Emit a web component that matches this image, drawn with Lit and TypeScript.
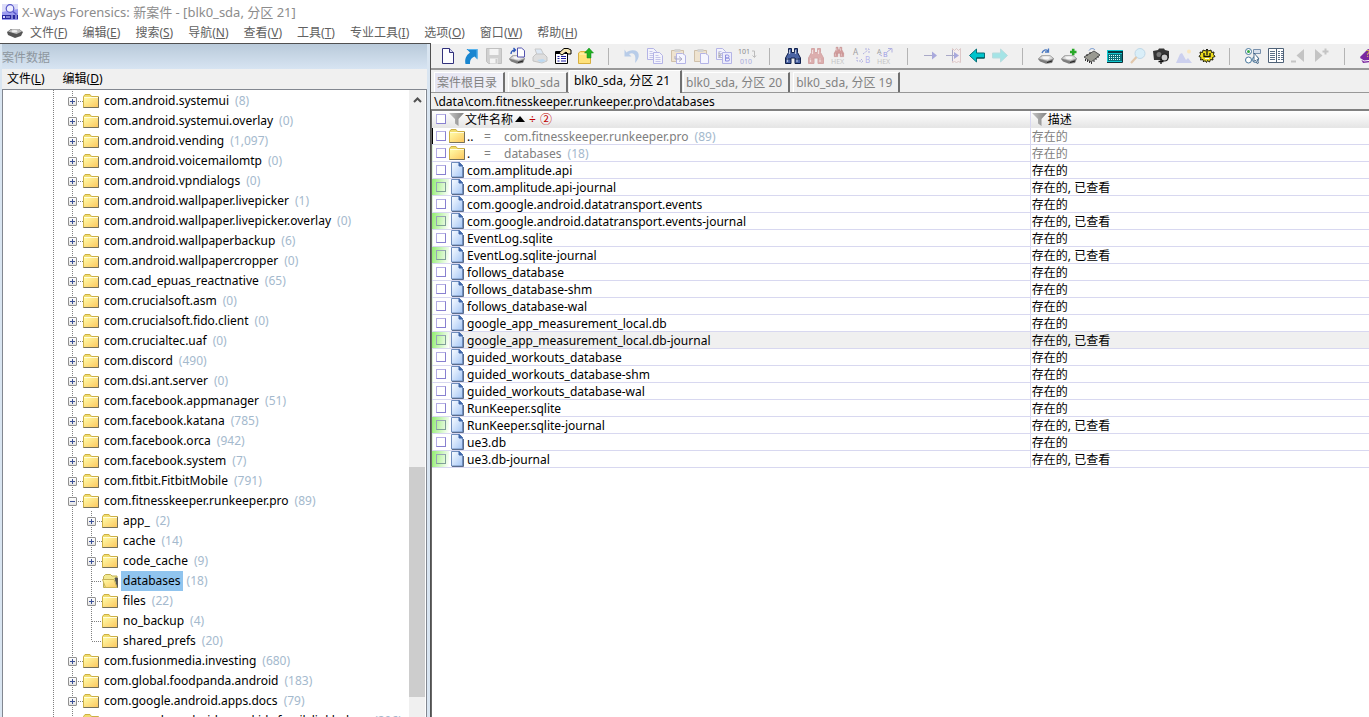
import { LitElement, html, css, svg, nothing, TemplateResult, SVGTemplateResult } from "lit";
import { customElement, property, state } from "lit/decorators.js";
import { classMap } from "lit/directives/class-map.js";

const folderShape = svg`
  <path d="M.5 14.500V3.500L2 1.500h5l1.500 2h7v11z" fill="#f0dc6c" stroke="#cdb044"/>
  <path d="M1 4.500h14v9.500H1z" fill="url(#fold)"/>
  <path d="M1 4.500h14" stroke="#fffde0"/>
  <path d="M.5 14.500h15V4" fill="none" stroke="#75705a"/>`;
const folderGradient = svg`<defs><linearGradient id="fold" x1="0" y1="0" x2="1" y2="1">
  <stop offset="0" stop-color="#fffca8"/><stop offset="1" stop-color="#fcc860"/></linearGradient></defs>`;

const drive = svg`
  <path d="M0 11l3.500-3.500h8.500l4 3-2 4.500-6 .8-6-2.300z" fill="#7d7d7d"/>
  <path d="M.500 10.500l4-3h7.500l3.500 3-6 2.500z" fill="#dcdcdc" stroke="#9b9b9b" stroke-width=".6"/>
  <ellipse cx="8" cy="9.800" rx="3.500" ry="1.300" fill="#f6f6f6"/>
  <path d="M9 14.500l5-1.500" stroke="#222" stroke-width="1.200"/>`;
const binoculars = (fill: string, stroke: string) => svg`
  <path d="M3.500 .5h3v4h3v-4h3v4l3 5.500v5.500h-5.500V10h-4v5.500H.5V10l3-5.500z" fill="${fill}" stroke="${stroke}"/>
  <path d="M4.500 2v4M2.500 10v4M10.500 2v4M12 10v4" stroke="#fff" stroke-opacity=".6" stroke-width="1.200"/>
  <path d="M.5 11h5.500M10 11h5.500" stroke="${stroke}"/>`;
const sheet = (x: number, y: number) => svg`
  <path d="M${x} ${y}h6l3 3v8h-9z" fill="#f4f4fc" stroke="#b4b4e6"/>
  <path d="M${x + 2} ${y + 3}h3M${x + 2} ${y + 5}h5M${x + 2} ${y + 7}h5M${x + 2} ${y + 9}h5" stroke="#c4c4ea"/>`;

const icons: Record<string, SVGTemplateResult> = {
  logo: svg`<path d="M0 0h16v16H0z" fill="#dcdcf8"/><path d="M0 8l16-3v11H0z" fill="#9c9cf0"/>
    <circle cx="8" cy="4.500" r="3.800" fill="#eef" stroke="#5656c8" stroke-width="1.200"/>
    <path d="M11 7.500l3.500 3" stroke="#5656c8" stroke-width="1.500"/><path d="M0 11h16v4H0z" fill="#2828a0"/>
    <path d="M1 12l2 2M3 12l-2 2M5 12v2M7 12v2M9 12h2M9 14h2M13 12h2M13 14h2" stroke="#d8d8ff"/>`,
  disk: svg`<path d="M0 7l4-3h8l4 3-2 4-6 2-7-3z" fill="#555"/><path d="M1 6.500l4-2.500h7l3 2.500-5.500 2.500z" fill="#b9b9b9"/>
    <ellipse cx="7.500" cy="6.300" rx="3" ry="1.200" fill="#eee"/>`,
  create: svg`<path d="M2.500 .5h7l4 4v11h-11z" fill="#fcfcff" stroke="#30307c"/><path d="M9.500 .5v4h4" fill="#d8d8f4" stroke="#30307c"/>`,
  open: svg`<path d="M3.500 1h11v10.500l-3-3c-4 2-4.500 4-4.500 7.500H2.500C1.500 11 3 7.500 7 4.500z" fill="#1a86d0"/><path d="M5 1.500h9V10" fill="none" stroke="#58b4ee"/>`,
  save: svg`<path d="M.5 .5h15v15h-13l-2-2z" fill="#d0d0d0" stroke="#c0c0c0"/><path d="M3.500 1h9v6h-9zM4 10.500h8v5H4z" fill="#f4f4f4"/><path d="M9.500 11h2v4h-2z" fill="#ccc"/>`,
  image: svg`${drive}<path d="M8.500 0h4l3 2.500V9h-7z" fill="#fff" stroke="#5454b0"/><path d="M2 6c0-3 2-4 4-4M4.500 0l2 2-2 2" fill="none" stroke="#2b57b8" stroke-width="1.300"/>`,
  print: svg`<path d="M3 1h6l3 6H5z" fill="#dde8f4" stroke="#c8c8c8"/><path d="M1 9l3-3h8l3 3v4l-5 2-9-2z" fill="#dedede" stroke="#c4c4c4"/><path d="M5 12l6-1 3 2-5 1.500z" fill="#bcd8f0"/>`,
  props: svg`<path d="M.5 3.500h12v12H.5z" fill="#fff" stroke="#000"/><path d="M1 5h11" stroke="#000" stroke-width="2"/>
    <path d="M2.500 8.500h2M6 8.500h5M2.500 10.500h2M6 10.500h5M2.500 13h2M6 13h5" stroke="#1c1ca0"/>
    <path d="M4 5l5-4.500h4L16 2v4h-3l-2-2-4 3z" fill="#f5e7b4" stroke="#000"/>`,
  exp: svg`<path d="M.5 5l2-1.500h10v12H.5z" fill="#ffe27c" stroke="#d8b040"/><path d="M1.500 6h7" stroke="#fff8c0"/>
    <path d="M11 0l4.500 5H13v5H9V5H6.500z" fill="#20b020" stroke="#0d8a18" stroke-width=".5"/>`,
  undo: svg`<path d="M.5 1.500v7h7L5 6C10 3.500 12.500 7 11 15c6-5.500 5-14-4-12.500-2 .3-3.500 1-4.500 2z" fill="#b8cce8"/>`,
  copy: svg`${sheet(0.5, 0.5)}${sheet(6.5, 4.5)}`,
  pasteIn: svg`<path d="M1.500 2.500h12v11h-12z" fill="#efe3cf" stroke="#cfc0aa"/><path d="M4.500 1h6v3h-6z" fill="#d4d4d4"/>
    <path d="M6.500 5.500h6l3 2v8h-9z" fill="#f6f6ff" stroke="#b4b4e6"/><path d="M5 8v3h6M9 8.500l3 2.500-3 2.500" fill="none" stroke="#a9a9c4"/>`,
  paste: svg`<path d="M1.500 2.500h12v11h-12z" fill="#efe3cf" stroke="#cfc0aa"/><path d="M4.500 1h6v3h-6z" fill="#d4d4d4"/>
    <path d="M7.500 5.500h5l3 2v8h-8z" fill="#f6f6ff" stroke="#b4b4e6"/>`,
  replace: svg`${sheet(0.5, 0.5)}<path d="M6.500 4.500h9v11h-9z" fill="#ededfb" stroke="#b4b4e6"/>
    <path d="M3 4v6M3 8l2.500-2M3.500 8l2 2" fill="none" stroke="#aaa"/><path d="M9.500 7v6h2.500a1.500 1.500 0 0 0 0-3h-2.500h2a1.500 1.500 0 0 0 0-3z" fill="none" stroke="#8e8ee0"/>`,
  convert: svg`<text x="-1" y="6" font-size="7" fill="#8a8a8a">101</text><text x="1" y="16" font-size="7" fill="#a9a9da">010</text>
    <path d="M13 3h2.500v6M13.500 7.500l2 2 1.500-2" fill="none" stroke="#bbb"/>`,
  find: binoculars("#4a64a4", "#10204c"),
  findText: svg`${binoculars("#dcaeae", "#d4a6a6")}`,
  findHex: svg`<g transform="translate(3 -1) scale(.62)">${binoculars("#d29d9d", "#c48b8b")}</g><text x="0" y="16" font-size="7" fill="#c4c4c4">HEX</text>`,
  replText: svg`<text x="-1" y="7" font-size="8" fill="#a0a0a0">A</text><text x="11" y="15" font-size="8" fill="#b4b4ee">B</text>
    <path d="M3 9v4h5M7 11l2 2-2 2M9 6l5-4M11 1h4v4" fill="none" stroke="#b0b0e0" stroke-dasharray="2 1"/>`,
  replHex: svg`<text x="0" y="6" font-size="7" fill="#a0a0a0">A</text><text x="6" y="9" font-size="7" fill="#9a9ae6">B</text>
    <path d="M2 6l3 2M10 4l4-3M11 .5h4v4" fill="none" stroke="#b0b0e0"/><text x="0" y="16" font-size="7" fill="#c4c4c4">HEX</text>`,
  goto: svg`<path d="M1 7.500h12" stroke="#a9a9c8"/><path d="M9 3.500l5 4-5 4z" fill="#a9a9dc"/>`,
  gotoIn: svg`<path d="M6.500 .5l2 2 2-2 2 2 2-2v14l-2-1-2 1-2-1-2 1z" fill="#f6eeee" stroke="#dcc8c8"/><path d="M0 7.500h10M6.500 2v11" stroke="#a9a9c8"/><path d="M8 4l5 3.500L8 11z" fill="#a9a9dc"/>`,
  back: svg`<path d="M.5 7.500L7.500 1v4h8v5h-8v4z" fill="#00c4cc" stroke="#087078"/><path d="M7.500 10h8" stroke="#044"/>`,
  forward: svg`<path d="M15.500 7.500L8.500 1v4h-8v5h8v4z" fill="#a4e4e6" stroke="#b8dcde"/>`,
  driveOpen: svg`${drive}<path d="M4 5c1-3 4-4 6-2M10.500 .5V4H7" fill="none" stroke="#4a78c0" stroke-width="1.300"/>`,
  driveAdd: svg`${drive}<path d="M9 4h6.500M12.200 .8v6.500" stroke="#28a828" stroke-width="2.600"/>`,
  ram: svg`<path d="M0 9l10-6 6 4-9 7z" fill="#9a9a92" stroke="#555"/><path d="M1.500 11v2M3.500 12v2M5.500 13v2M7.500 14v2M10 12v2M12 10v2M14 8v2M3 6v2M6 4v2" stroke="#333"/><path d="M5 2.500c2-3 5-2 6-.5" fill="none" stroke="#6a90cc"/>`,
  calc: svg`<path d="M0 2h16v12H0z" fill="#10c8d0"/><path d="M1 3h14v2H1z" fill="#063c44"/><path d="M1 6h14v7H1z" fill="#0a7078"/>
    <path d="M2 7.500h12M2 9.500h12M2 11.500h12" stroke="#d8ffff" stroke-dasharray="1 1"/><path d="M0 14.500h15.500V3" fill="none" stroke="#0a3038"/>`,
  lens: svg`<circle cx="10" cy="5.500" r="5" fill="#d9eef8" stroke="#bfd8e8"/><path d="M6.500 9L1 15" stroke="#e2c8ac" stroke-width="2.200"/>`,
  camera: svg`<path d="M0 3l5-1 1-1.500h5l1 1.500 4 1v7l-4 2H1z" fill="#363636"/><circle cx="6" cy="6.500" r="2.500" fill="#777"/><circle cx="11.500" cy="9.500" r="3.500" fill="#ccc" stroke="#222" stroke-width="1.200"/><path d="M5.500 13.500h5M8 11v5" stroke="#111" stroke-width="1.300"/>`,
  gallery: svg`<path d="M0 15l4-9 2-1 4 7 2-2 4 5z" fill="#ccd0ee"/><circle cx="13" cy="3.500" r="2" fill="#fae6bc"/>`,
  gear: svg`<path d="M1 4l2.500.5.5-2.500 2.500 1L8 1l1.500 2L12 2l.5 2.500L15 4l-.5 2.500 1.500 2-2.500 1 .5 2.500-2.500-.5-1 2.500-2-1.500-1 2-1.500-2L4.500 14 4 11.500l-2.500.5.5-2.500-2-1 1.500-2z" fill="#ecdc1c" stroke="#1c1c08"/><path d="M5 5v3.500h6V5M8 1v6" fill="none" stroke="#111" stroke-width="1.300"/><path d="M6 10.500h4" stroke="#fff"/>`,
  select: svg`<circle cx="3.500" cy="3.500" r="3" fill="#fff" stroke="#47769c"/><circle cx="3.500" cy="3.500" r="1.500" fill="#33a844"/><circle cx="3.500" cy="12" r="3" fill="#fff" stroke="#47769c"/>
    <circle cx="10.500" cy="11.500" r="3" fill="#fff" stroke="#47769c"/><path d="M8.500 1.500h7v4h-7z" fill="#d8e0ec" stroke="#7890ac"/><path d="M9 5l5 6-2 .5 1.500 3.500-1.500.5-1.500-3.500L9 13.500z" fill="#fff" stroke="#2f5478" stroke-width=".8"/>`,
  columns: svg`<path d="M.5 .5h15v14H.5z" fill="#fff" stroke="#4f6278"/><path d="M8.500 1v13" stroke="#4f6278"/><path d="M2 3.500h5M2 5.500h5M2 7.500h5M2 9.500h5M2 11.500h5M10 3.500h2M13 3.500h2M10 5.500h2M13 5.500h2M10 7.500h2M13 7.500h2M10 9.500h2M13 9.500h2M10 11.500h2M13 11.500h2" stroke="#5c7088"/>`,
  less: svg`<path d="M13 1v13L5.500 7.500z" fill="#c4c4c4"/><path d="M0 13.500h5" stroke="#c4c4c4" stroke-width="2"/>`,
  more: svg`<path d="M1 1v13l7.500-6.500z" fill="#c4c4c4"/><path d="M8.500 3.500h6M11.500 .5v6" stroke="#c4c4c4" stroke-width="2"/>`,
  help: svg`<path d="M0 9L8 1l10 3-6 10-9 1z" fill="#7a28a0"/><path d="M1 11l3 2 9-1" fill="none" stroke="#fff"/><text x="6" y="9" font-size="8" fill="#ffd93c">?</text>`,
  folder: svg`${folderGradient}${folderShape}`,
  folderOpen: svg`${folderGradient}<path d="M1.500 14.500V3.500L3.500 1.500h5l1.500 1.500h5v11.500z" fill="#f2e890" stroke="#c0ae50"/><path d="M13 5h2.500v9.500z" fill="#555" stroke="#555"/><path d="M.5 6.500h11.500l3 8H3.500z" fill="url(#fold)" stroke="#c8b458"/>`,
  file: svg`<defs><linearGradient id="page" x1="0" y1="0" x2="1" y2="1"><stop offset="0" stop-color="#fbfdff"/><stop offset="1" stop-color="#a4c6f6"/></linearGradient></defs>
    <path d="M2.500 .5h8l3 3v11.500h-11z" fill="url(#page)" stroke="#6f8cbc"/><path d="M10 .5v3.500h3.500z" fill="#3c64a8" stroke="#3c64a8"/><path d="M3 15.500h11.500V5" fill="none" stroke="#5a6c8c"/>`,
  funnel: svg`<defs><linearGradient id="fun"><stop offset="0" stop-color="#c6c6c6"/><stop offset="1" stop-color="#808080"/></linearGradient></defs><path d="M0 2h15L9.500 8v7L6 12.500V8z" fill="url(#fun)"/>`,
};

const icon = (name: string): TemplateResult =>
  html`<svg class="icon" viewBox="0 0 16 16" width="16" height="16" aria-hidden="true">${icons[name]}</svg>`;

interface TreeNode { name: string; count: string; leaf?: boolean; children?: TreeNode[]; }
const n = (name: string, count: string, leaf = false): TreeNode => ({ name, count, leaf });

const TREE: TreeNode[] = [
  n("com.android.systemui", "8"),
  n("com.android.systemui.overlay", "0"),
  n("com.android.vending", "1,097"),
  n("com.android.voicemailomtp", "0"),
  n("com.android.vpndialogs", "0"),
  n("com.android.wallpaper.livepicker", "1"),
  n("com.android.wallpaper.livepicker.overlay", "0"),
  n("com.android.wallpaperbackup", "6"),
  n("com.android.wallpapercropper", "0"),
  n("com.cad_epuas_reactnative", "65"),
  n("com.crucialsoft.asm", "0"),
  n("com.crucialsoft.fido.client", "0"),
  n("com.crucialtec.uaf", "0"),
  n("com.discord", "490"),
  n("com.dsi.ant.server", "0"),
  n("com.facebook.appmanager", "51"),
  n("com.facebook.katana", "785"),
  n("com.facebook.orca", "942"),
  n("com.facebook.system", "7"),
  n("com.fitbit.FitbitMobile", "791"),
  {
    name: "com.fitnesskeeper.runkeeper.pro", count: "89", children: [
      n("app_", "2"), n("cache", "14"), n("code_cache", "9"), n("databases", "18", true),
      n("files", "22"), n("no_backup", "4", true), n("shared_prefs", "20", true),
    ],
  },
  n("com.fusionmedia.investing", "680"),
  n("com.global.foodpanda.android", "183"),
  n("com.google.android.apps.docs", "79"),
  n("com.google.android.apps.kids.familylinkhelper", "206"),
];

const FILES: [string, boolean][] = [
  ["com.amplitude.api", false],
  ["com.amplitude.api-journal", true],
  ["com.google.android.datatransport.events", false],
  ["com.google.android.datatransport.events-journal", true],
  ["EventLog.sqlite", false],
  ["EventLog.sqlite-journal", true],
  ["follows_database", false],
  ["follows_database-shm", false],
  ["follows_database-wal", false],
  ["google_app_measurement_local.db", false],
  ["google_app_measurement_local.db-journal", true],
  ["guided_workouts_database", false],
  ["guided_workouts_database-shm", false],
  ["guided_workouts_database-wal", false],
  ["RunKeeper.sqlite", false],
  ["RunKeeper.sqlite-journal", true],
  ["ue3.db", false],
  ["ue3.db-journal", true],
];

const MENU: [string, string][] = [
  ["文件", "F"], ["编辑", "E"], ["搜索", "S"], ["导航", "N"], ["查看", "V"],
  ["工具", "T"], ["专业工具", "I"], ["选项", "O"], ["窗口", "W"], ["帮助", "H"],
];

const TOOLS: [string, string][][] = [
  [["create", "新建"], ["open", "打开"], ["save", "保存"], ["image", "创建镜像"], ["print", "打印"], ["props", "属性"], ["exp", "导出"]],
  [["undo", "撤销"], ["copy", "复制"], ["pasteIn", "插入"], ["paste", "粘贴"], ["replace", "写入"], ["convert", "转换"]],
  [["find", "同步搜索"], ["findText", "搜索文本"], ["findHex", "搜索十六进制"], ["replText", "替换文本"], ["replHex", "替换十六进制"]],
  [["goto", "转到偏移"], ["gotoIn", "转到扇区"], ["back", "后退"], ["forward", "前进"]],
  [["driveOpen", "打开磁盘"], ["driveAdd", "添加磁盘"], ["ram", "打开内存"], ["calc", "计算器"], ["lens", "分析"], ["camera", "快照"], ["gallery", "图库"], ["gear", "选项"]],
  [["select", "选择"], ["columns", "目录浏览器"], ["less", "减少"], ["more", "增加"]],
  [["help", "帮助"]],
];

const base = css`
  :host { font: 12px/16px "Noto Sans", "Noto Sans CJK SC", sans-serif; }
  * { box-sizing: border-box; }
  button { font: inherit; color: inherit; background: none; border: 0; padding: 0; margin: 0; white-space: nowrap; text-align: left; }
  ul { list-style: none; margin: 0; padding: 0; }
  .icon { display: block; flex: none; overflow: visible; }
`;

@customElement("case-tree")
export class CaseTree extends LitElement {
  @property() selected = "databases";

  static styles = [base, css`
    :host { display: block; min-height: 0; flex: 1; }
    .box { display: flex; height: 100%; border: 1px solid #828790; border-bottom: 0; background: #fff; }
    .list { flex: 1; min-width: 0; overflow: hidden; padding: 1px 0 0 65px; background: repeating-linear-gradient(#808080 0 1px, transparent 1px 2px) 50px 0 / 1px 100% no-repeat; }
    li { background: repeating-linear-gradient(#808080 0 1px, transparent 1px 2px) 4px 0 / 1px 100% no-repeat; }
    .sub { margin-left: 19px; }
    .sub > li:last-child { background-size: 1px 10px; }
    .row { display: flex; align-items: center; height: 20px; }
    .toggle { position: relative; flex: none; width: 9px; height: 9px; border: 1px solid #919191; border-radius: 1px; background: linear-gradient(#fff, #e4e4e4); }
    .toggle::before, .toggle.closed::after { content: ""; position: absolute; left: 1px; top: 3px; width: 5px; height: 1px; background: #3a4f96; }
    .toggle.closed::after { left: 3px; top: 1px; width: 1px; height: 5px; }
    .dots { flex: none; width: 6px; height: 1px; background: repeating-linear-gradient(90deg, transparent 0 1px, #808080 1px 2px); }
    .dots.wide { width: 11px; margin-left: 4px; }
    .label { height: 20px; padding: 0 2px; margin-left: 3px; color: #000; }
    .label.on { background: #90c4ee; }
    .count { color: #a4b9cd; margin-left: 4px; white-space: nowrap; }
    .bar { flex: none; width: 17px; padding-right: 1px; display: flex; flex-direction: column; background: #f0f0f0; background-clip: content-box; }
    .up { height: 20px; display: grid; place-items: center; }
    .before { flex: 357; } .thumb { flex: 230; background: #cdcdcd; } .after { flex: 20; }
  `];

  private node(t: TreeNode): TemplateResult {
    const on = t.name === this.selected;
    return html`<li>
      <div class="row">
        ${t.leaf ? nothing : html`<button class=${classMap({ toggle: true, closed: !t.children })} aria-label="展开 ${t.name}"></button>`}
        <span class=${classMap({ dots: true, wide: !!t.leaf })}></span>
        ${icon(on ? "folderOpen" : "folder")}
        <button class=${classMap({ label: true, on })}>${t.name}</button>
        <span class="count">(${t.count})</span>
      </div>
      ${t.children ? html`<ul class="sub">${t.children.map((c) => this.node(c))}</ul>` : nothing}
    </li>`;
  }

  render() {
    return html`<div class="box">
      <ul class="list">${TREE.map((t) => this.node(t))}</ul>
      <div class="bar">
        <button class="up" aria-label="向上滚动"><svg width="9" height="6" viewBox="0 0 9 6"><path d="M1 5l3.500-3.500L8 5" fill="none" stroke="#505050" stroke-width="2"/></svg></button>
        <div class="before"></div><div class="thumb"></div><div class="after"></div>
      </div>
    </div>`;
  }
}

@customElement("file-browser")
export class FileBrowser extends LitElement {
  static styles = [base, css`
    :host { display: block; flex: 1; min-height: 0; background: #fff; border-left: 1px solid #696969; border-top: 2px solid #808080; }
    table { width: 100%; table-layout: fixed; border-collapse: separate; border-spacing: 0; }
    .first { width: 63.8%; }
    th, td { padding: 0; font-weight: 400; text-align: left; border-bottom: 1px solid #d8d8f0; }
    th { background: linear-gradient(#fff, #e6e6e6); border-bottom-color: #e6e6e6; }
    th + th, td + td { border-left: 1px solid #d8d8f0; padding-left: 1px; }
    .cell { display: flex; align-items: flex-start; height: 16px; line-height: 18px; white-space: nowrap; overflow: hidden; }
    .tick { display: flex; flex: none; width: 17px; height: 16px; align-items: center; padding-left: 3px; border-left: 1px solid #e0f5d8; }
    th .tick { border-left-color: transparent; }
    .current .tick { border-left-color: #000; }
    .tick.seen { background: linear-gradient(100deg, #98ee78, #fff); border-left-color: #98ee78; }
    input { appearance: none; width: 10px; height: 10px; margin: 0; border: 1px solid; border-color: #b4aee4 #8880d0 #8880d0 #b4aee4; background: #fff; }
    .seen input { background: transparent; border-color: #98a4b8 #80a098 #80a098 #98a4b8; }
    .rel { color: #808080; }
    .rel .dots { color: #000; width: 17px; }
    .eq { width: 20px; }
    .count { color: #a4b9cd; margin-left: 6px; }
    .hover td { background: #f0f0f0; }
    .name { padding-left: 2px; }
    .folder { margin-right: 2px; }
    .sort { margin: 5px 0 0 2px; }
    .mark { color: #c00000; margin-left: 4px; }
  `];

  private tick(label: string, seen = false) {
    return html`<label class=${classMap({ tick: true, seen })}><input type="checkbox" aria-label=${label}></label>`;
  }

  private rel(dots: string, name: string, count: string, current: boolean) {
    return html`<tr class=${classMap({ rel: true, current })}>
      <td><div class="cell">${this.tick(name)}<span class="folder">${icon("folder")}</span><span class="dots">${dots}</span><span class="eq">=</span>${name}<span class="count">(${count})</span></div></td>
      <td><div class="cell">存在的</div></td></tr>`;
  }

  render() {
    return html`<table>
      <thead><tr>
        <th class="first"><div class="cell">${this.tick("全选")}${icon("funnel")}文件名称<svg class="sort" width="10" height="6" viewBox="0 0 10 6"><path d="M5 0l5 6H0z"/></svg><span class="mark">÷</span><span class="mark">②</span></div></th>
        <th><div class="cell">${icon("funnel")}描述</div></th>
      </tr></thead>
      <tbody>
        ${this.rel("..", "com.fitnesskeeper.runkeeper.pro", "89", true)}
        ${this.rel(".", "databases", "18", false)}
        ${FILES.map(([name, seen], i) => html`<tr class=${classMap({ hover: i === 10 })}>
          <td><div class="cell">${this.tick(name, seen)}${icon("file")}<span class="name">${name}</span></div></td>
          <td><div class="cell">${seen ? "存在的, 已查看" : "存在的"}</div></td></tr>`)}
      </tbody>
    </table>`;
  }
}

@customElement("app-root")
export class AppRoot extends LitElement {
  @state() private tab = 2;
  private tabs = ["案件根目录", "blk0_sda", "blk0_sda, 分区 21", "blk0_sda, 分区 20", "blk0_sda, 分区 19"];

  static styles = [base, css`
    :host { display: flex; flex-direction: column; height: 100vh; overflow: hidden; background: #f0f0f0; color: #000; }
    .title { display: flex; align-items: center; gap: 4px; height: 24px; padding-left: 2px; background: #fff; color: #8c8c8c; font-size: 13px; white-space: nowrap; }
    .menu { display: flex; align-items: flex-start; gap: 15px; height: 19px; padding: 1px 0 0 7px; background: #fff; color: #606060; }
    .menu .icon { margin-right: -8px; }
    .main { flex: 1; min-height: 0; display: flex; }
    .left { flex: none; width: 431px; display: flex; flex-direction: column; padding-left: 2px; padding-right: 3px; background: #d9e5f1; border-top: 1px solid #505050; border-right: 1px solid #505050; }
    .caption { height: 25px; padding-top: 6px; color: #8e979f; background: linear-gradient(#b9cada, #d7e4f2); }
    .sidemenu { display: flex; gap: 18px; height: 20px; padding: 1px 5px; background: #f0f0f0; }
    .right { flex: 1; min-width: 0; display: flex; flex-direction: column; }
    .tools { display: flex; align-items: center; height: 27px; padding-left: 5px; border-bottom: 2px solid #989898; border-top: 1px solid #fff; overflow: hidden; }
    .tools button, .sep { flex: none; width: 23px; height: 23px; display: grid; place-items: center; }
    .sep::before { content: ""; width: 1px; height: 17px; background: #b4b4b4; }
    .tabs { display: flex; align-items: flex-end; gap: 3px; height: 23px; padding-left: 3px; border-bottom: 1px solid #989898; }
    .tab { height: 20px; padding: 0 6px 0 2px; color: #828282; border: 1px solid #fff; border-right: 2px solid #707070; border-bottom: 0; }
    .tab.root { background: linear-gradient(135deg, #e4e4f2, #f4f4f8); }
    .tab.on { height: 23px; padding: 0 10px 3px 4px; margin: 0 -2px -1px; color: #000; background: #f4f4f4; }
    .path { height: 16px; padding-left: 3px; line-height: 18px; white-space: nowrap; }
  `];

  render() {
    return html`
      <header class="title">${icon("logo")}<span>X-Ways Forensics: 新案件 - [blk0_sda, 分区 21]</span></header>
      <nav class="menu">${icon("disk")}${MENU.map(([t, k]) => html`<button>${t}(<u>${k}</u>)</button>`)}</nav>
      <div class="main">
        <aside class="left">
          <div class="caption">案件数据</div>
          <nav class="sidemenu"><button>文件(<u>L</u>)</button><button>编辑(<u>D</u>)</button></nav>
          <case-tree></case-tree>
        </aside>
        <main class="right">
          <div class="tools">${TOOLS.map((g, i) => html`${i ? html`<span class="sep"></span>` : nothing}${g.map(([id, label]) => html`<button aria-label=${label}>${icon(id)}</button>`)}`)}</div>
          <nav class="tabs">${this.tabs.map((t, i) => html`<button class=${classMap({ tab: true, on: i === this.tab, root: i === 0 })} @click=${() => (this.tab = i)}>${t}</button>`)}</nav>
          <div class="path">\\data\\com.fitnesskeeper.runkeeper.pro\\databases</div>
          <file-browser></file-browser>
        </main>
      </div>`;
  }
}
